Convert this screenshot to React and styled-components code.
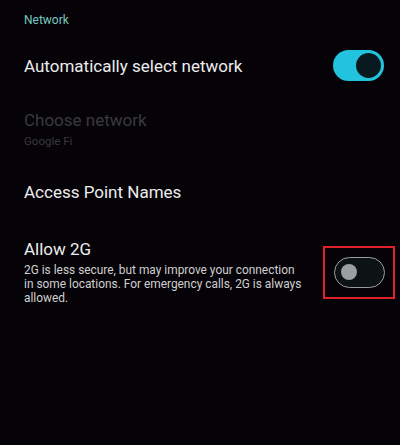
import styled, { createGlobalStyle } from "styled-components";

const GlobalStyle = createGlobalStyle`
  html, body {
    margin: 0;
    padding: 0;
    background: #050308;
  }
`;

const Screen = styled.div`
  width: 400px;
  height: 445px;
  background: #050308;
  font-family: Roboto, "Open Sans", sans-serif;
  padding: 12px 16px 0 24px;
  box-sizing: border-box;
  overflow: hidden;
`;

const SectionTitle = styled.div`
  color: #73c9bd;
  font-size: 12px;
  line-height: 16px;
  margin-bottom: 22px;
`;

const Row = styled.div`
  display: flex;
  align-items: ${(p) => (p.top ? "flex-start" : "center")};
  justify-content: space-between;
  margin-bottom: ${(p) => p.gap || 0}px;
`;

const Texts = styled.div`
  display: flex;
  flex-direction: column;
  max-width: 290px;
`;

const Title = styled.div`
  color: ${(p) => (p.disabled ? "#3a3a3d" : "#ececec")};
  font-size: 17px;
  line-height: 24px;
`;

const Summary = styled.div`
  color: ${(p) => (p.disabled ? "#38383a" : "#cfcfcf")};
  font-size: ${(p) => (p.disabled ? 11.5 : 11.9)}px;
  line-height: 14px;
  margin-top: ${(p) => p.mt || 2}px;
  white-space: nowrap;
`;

const Track = styled.div`
  width: 51px;
  height: 31px;
  border-radius: 16px;
  box-sizing: border-box;
  display: flex;
  align-items: center;
  background: ${(p) => (p.on ? "#22c3dc" : "#0d1313")};
  border: ${(p) => (p.on ? "none" : "1.5px solid #9a9e9e")};
  justify-content: ${(p) => (p.on ? "flex-end" : "flex-start")};
  padding: ${(p) => (p.on ? "0 3px" : "0 6px")};
`;

const Thumb = styled.div`
  width: ${(p) => (p.on ? 25 : 16)}px;
  height: ${(p) => (p.on ? 25 : 16)}px;
  border-radius: 50%;
  background: ${(p) => (p.on ? "#081a20" : "#9aa0a0")};
`;

const Highlight = styled.div`
  border: 2.5px solid #e0212b;
  padding: 8.5px 8.5px 9.5px 8.5px;
  margin-right: -11px;
  margin-top: 9px;
`;

function Switch({ on }) {
  return (
    <Track on={on ? 1 : 0}>
      <Thumb on={on ? 1 : 0} />
    </Track>
  );
}

export default function App() {
  return (
    <>
      <GlobalStyle />
      <Screen>
        <SectionTitle>Network</SectionTitle>
        <Row gap={27}>
          <Title>Automatically select network</Title>
          <Switch on />
        </Row>
        <Row gap={32}>
          <Texts>
            <Title disabled>Choose network</Title>
            <Summary disabled>Google Fi</Summary>
          </Texts>
        </Row>
        <Row gap={33}>
          <Title>Access Point Names</Title>
        </Row>
        <Row top>
          <Texts>
            <Title>Allow 2G</Title>
            <Summary mt={2}>
              2G is less secure, but may improve your connection
              <br />
              in some locations. For emergency calls, 2G is always
              <br />
              allowed.
            </Summary>
          </Texts>
          <Highlight>
            <Switch />
          </Highlight>
        </Row>
      </Screen>
    </>
  );
}
